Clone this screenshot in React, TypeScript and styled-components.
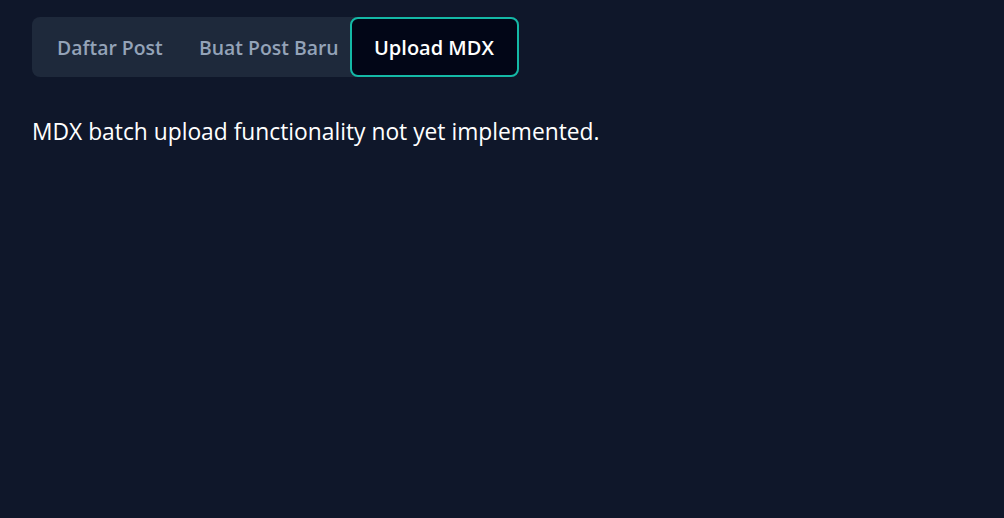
import styled, { createGlobalStyle } from "styled-components";
import { useState } from "react";

const tabs = [
  { id: "list", label: "Daftar Post", width: 142 },
  { id: "new", label: "Buat Post Baru", width: 176 },
  { id: "mdx", label: "Upload MDX", width: 169 },
];

const GlobalStyle = createGlobalStyle`
  html, body {
    margin: 0;
    background-color: #0f172a;
    font-family: "Open Sans", "Noto Sans", sans-serif;
  }
`;

const Page = styled("div")`
  min-height: 518px;
  padding: 17px 32px;
  box-sizing: border-box;
  background-color: #0f172a;
  display: flex;
  flex-direction: column;
  align-items: flex-start;
  gap: 39px;
`;

const TabList = styled("div")`
  display: flex;
  background-color: #1e293b;
  border-radius: 8px;
  height: 60px;
`;

const Tab = styled("button")<{ $active: boolean; $width: number }>`
  display: flex;
  align-items: center;
  box-sizing: border-box;
  width: ${(p) => p.$width}px;
  height: 100%;
  padding: 0 0 0 ${(p) => (p.$active ? 22 : 25)}px;
  border: 2px solid ${(p) => (p.$active ? "#14b8a6" : "transparent")};
  ${(p) => (p.$active ? "" : "border-width: 0;")}
  border-radius: 8px;
  background-color: ${(p) => (p.$active ? "#020617" : "transparent")};
  color: ${(p) => (p.$active ? "#ffffff" : "#94a3b8")};
  font-family: inherit;
  font-size: ${(p) => (p.$active ? 20 : 19.4)}px;
  font-weight: 600;
  white-space: nowrap;
  cursor: pointer;
`;

const Message = styled("p")`
  margin: 0;
  color: #ffffff;
  font-size: 22.8px;
  line-height: 32px;
`;

export default function App() {
  const [active, setActive] = useState("mdx");
  return (
    <>
      <GlobalStyle />
      <Page>
        <TabList>
          {tabs.map((t) => (
            <Tab
              key={t.id}
              $active={active === t.id}
              $width={t.width}
              onClick={() => setActive(t.id)}>
              {t.label}
            </Tab>
          ))}
        </TabList>
        <Message>MDX batch upload functionality not yet implemented.</Message>
      </Page>
    </>
  );
}
